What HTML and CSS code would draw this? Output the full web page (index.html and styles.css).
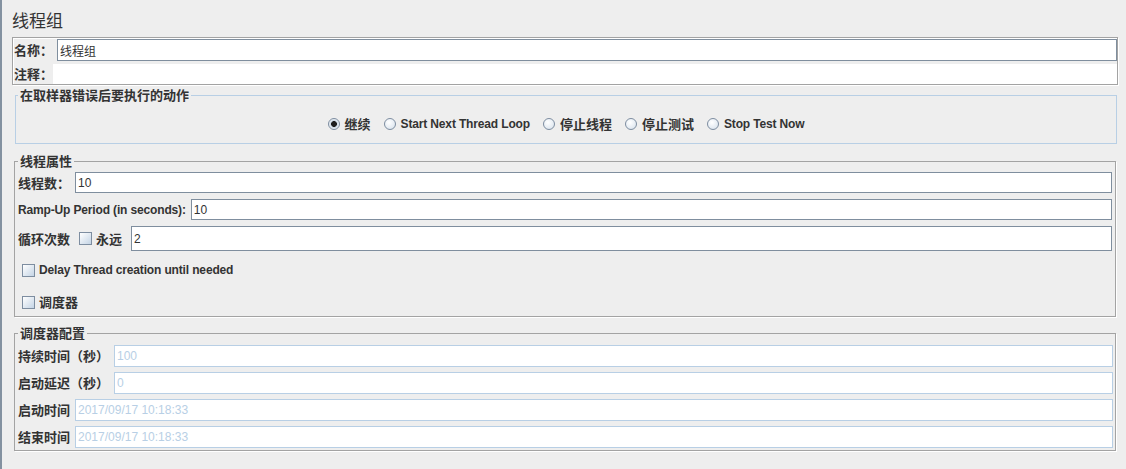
FILE: index.html
```html
<!DOCTYPE html>
<html lang="zh-CN">
<head>
    <meta charset="UTF-8">
    <meta name="viewport" content="width=device-width, initial-scale=1.0">
    <title>线程组</title>
    <link rel="stylesheet" href="styles.css">
</head>
<body>
    <div class="page">
        <h1 class="title">线程组</h1>

        <div class="info">
            <div class="info-row">
                <label class="cn name-label" for="name">名称：</label>
                <input id="name" class="field name-field" type="text" value="线程组">
            </div>
            <div class="info-row comment-row">
                <label class="cn" for="comment">注释：</label>
                <input id="comment" class="comment-field" type="text">
            </div>
        </div>

        <fieldset class="group on-error">
            <legend class="cn">在取样器错误后要执行的动作</legend>
            <div class="radios">
                <label class="radio"><input type="radio" name="action" checked><span class="cn">继续</span></label>
                <label class="radio"><input type="radio" name="action"><span class="en">Start Next Thread Loop</span></label>
                <label class="radio"><input type="radio" name="action"><span class="cn">停止线程</span></label>
                <label class="radio"><input type="radio" name="action"><span class="cn">停止测试</span></label>
                <label class="radio"><input type="radio" name="action"><span class="en">Stop Test Now</span></label>
            </div>
        </fieldset>

        <fieldset class="group etched props">
            <legend class="cn">线程属性</legend>
            <div class="row">
                <label class="cn" for="threads">线程数：</label>
                <input id="threads" class="field" type="text" value="10">
            </div>
            <div class="row">
                <label class="en" for="rampup">Ramp-Up Period (in seconds):</label>
                <input id="rampup" class="field" type="text" value="10">
            </div>
            <div class="row row-tall">
                <span class="cn">循环次数</span>
                <label class="check forever"><input type="checkbox"><span class="cn">永远</span></label>
                <input class="field" type="text" value="2">
            </div>
            <div class="row check-row">
                <label class="check"><input type="checkbox"><span class="en">Delay Thread creation until needed</span></label>
            </div>
            <div class="row check-row last">
                <label class="check"><input type="checkbox"><span class="cn">调度器</span></label>
            </div>
        </fieldset>

        <fieldset class="group etched sched">
            <legend class="cn">调度器配置</legend>
            <div class="row">
                <label class="cn" for="duration">持续时间（秒）</label>
                <input id="duration" class="field off" type="text" value="100" disabled>
            </div>
            <div class="row">
                <label class="cn" for="delay">启动延迟（秒）</label>
                <input id="delay" class="field off" type="text" value="0" disabled>
            </div>
            <div class="row">
                <label class="cn" for="start">启动时间</label>
                <input id="start" class="field off" type="text" value="2017/09/17 10:18:33" disabled>
            </div>
            <div class="row">
                <label class="cn" for="end">结束时间</label>
                <input id="end" class="field off" type="text" value="2017/09/17 10:18:33" disabled>
            </div>
        </fieldset>
    </div>
</body>
</html>
```

FILE: styles.css
```css
* {
    box-sizing: border-box;
}

body {
    margin: 0;
    min-height: 100vh;
    background-color: #eeeeee;
    border-left: 2px solid #8391a0;
    font-family: "Liberation Sans", "Noto Sans CJK SC", sans-serif;
    font-size: 12px;
    line-height: 14px;
    color: #333;
}

.page {
    padding: 0 8px 0 10px;
}

.title {
    margin: 10px 0 0;
    font-family: "Noto Sans CJK SC", sans-serif;
    font-size: 17px;
    line-height: 20px;
    font-weight: normal;
    color: #333;
}

.cn {
    font-family: "Noto Sans CJK SC", sans-serif;
    font-size: 13px;
    font-weight: bold;
    white-space: nowrap;
}

.en {
    font-weight: bold;
    letter-spacing: -0.15px;
    white-space: nowrap;
}

/* name / comment block */
.info {
    margin-top: 7px;
    padding: 1px 0 0 1px;
    border: 1px solid #a3a3a3;
    box-shadow: 1px 1px 0 #fff, inset 1px 1px 0 #fff;
}

.info-row {
    display: flex;
    align-items: center;
    height: 22px;
}

.comment-row {
    margin-top: 3px;
    height: 20px;
}

.name-label {
    margin-right: 4px;
}

.comment-field {
    flex: 1;
    height: 20px;
    border: none;
    background-color: #fff;
    outline: none;
}

/* text fields */
.field {
    flex: 1;
    min-width: 0;
    height: 21px;
    margin-left: 5px;
    padding: 0 2px;
    border: 1px solid #7f8e9e;
    background-color: #fff;
    font-family: "Liberation Sans", "Noto Sans CJK SC", sans-serif;
    font-size: 12px;
    color: #333;
    outline: none;
}

.name-field {
    height: 22px;
    margin-left: 0;
}

.field.off {
    height: 22px;
    border-color: #b8cfe5;
    color: #b8cfe5;
    -webkit-text-fill-color: #b8cfe5;
    background-color: #fff;
}

/* titled groups */
.group {
    margin: 0;
    min-inline-size: 0;
}

.group legend {
    padding: 0 2px;
    line-height: 14px;
}

.on-error {
    margin: 3px 1px 0 3px;
    padding: 12px 2px 9px;
    border: 1px solid #b8cfe5;
}

.etched {
    border: 1px solid #a3a3a3;
    box-shadow: 1px 1px 0 #fff;
}

.props {
    margin: 10px 2px 0;
    padding: 4px 3px 2px;
}

.sched {
    margin: 9px 2px 0;
    padding: 5px 2px 2px 3px;
}

.radios {
    display: flex;
    justify-content: center;
    align-items: center;
    gap: 13px;
    height: 20px;
}

.radio,
.check {
    display: flex;
    align-items: center;
}

.radio input {
    appearance: none;
    width: 12px;
    height: 12px;
    margin: 0 5px 0 0;
    border: 1px solid #7d8da0;
    border-radius: 50%;
    background: radial-gradient(circle at 40% 35%, #ffffff 0, #dde6ef 80%);
}

.radio input:checked {
    background: radial-gradient(circle, #1e1e1e 0 2.6px, #c9d6e3 3.2px, #ffffff 6px);
}

.check input {
    appearance: none;
    width: 13px;
    height: 13px;
    margin: 0 4px 0 0;
    border: 1px solid #7d8da0;
    background: linear-gradient(135deg, #ffffff 0, #c4d4e5 100%);
}

/* rows inside groups */
.row {
    display: flex;
    align-items: center;
    height: 21px;
    margin-top: 6px;
}

.row:first-of-type {
    margin-top: 0;
}

.row-tall {
    height: 25px;
}

.row-tall .field {
    height: 25px;
}

.forever {
    margin-left: 9px;
    margin-right: 4px;
}

.check-row {
    height: 24px;
    margin-top: 7px;
    padding-left: 4px;
}

.check-row.last {
    margin-top: 8px;
}

.sched .row {
    height: 22px;
    margin-top: 5px;
}

.sched .row:first-of-type {
    margin-top: 0;
}
```
